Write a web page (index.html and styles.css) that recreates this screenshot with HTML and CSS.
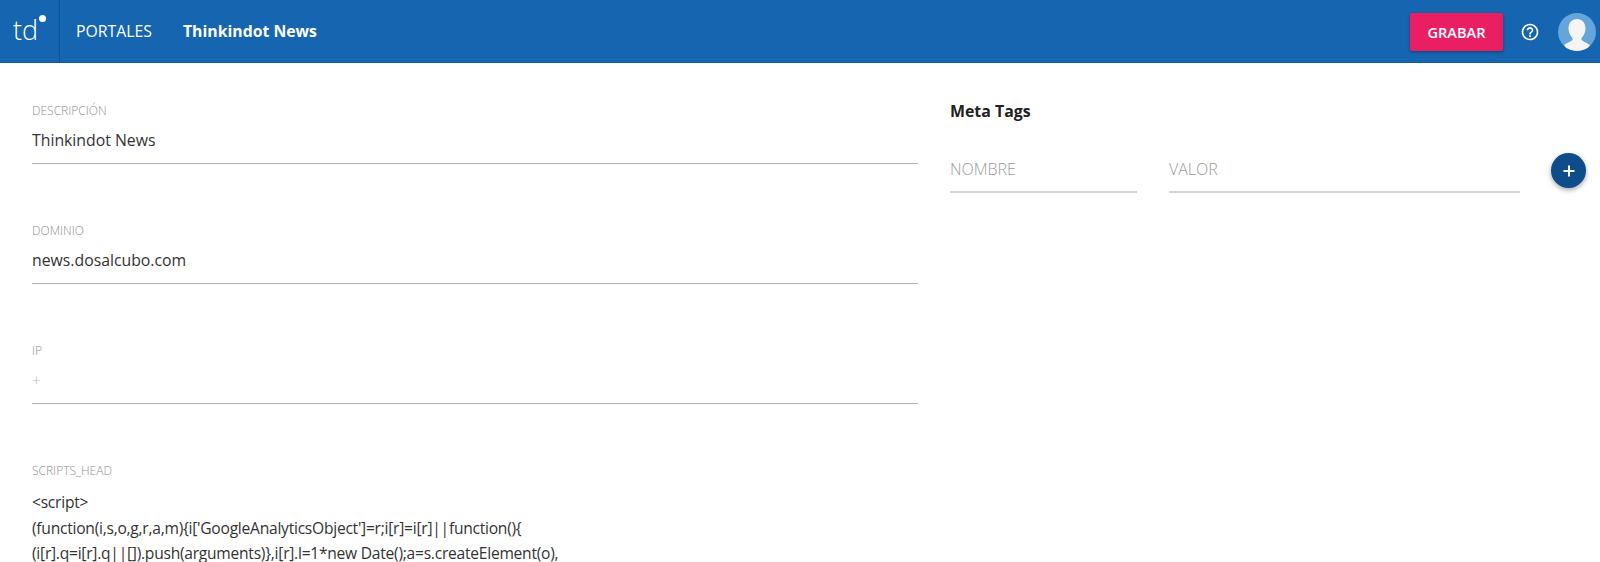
FILE: index.html
```html
<!DOCTYPE html>
<html lang="es">
<head>
<meta charset="utf-8">
<title>Thinkindot News</title>
<link rel="stylesheet" href="styles.css">
</head>
<body>
<header class="topbar">
  <div class="logo"><span class="logo-text">td</span><span class="logo-dot"></span></div>
  <nav class="crumbs">
    <a class="crumb">PORTALES</a>
    <a class="crumb crumb-current">Thinkindot News</a>
  </nav>
  <div class="actions">
    <button class="save">GRABAR</button>
    <svg class="help" viewBox="0 0 24 24" width="20" height="20" aria-hidden="true">
      <path fill="#fff" d="M11 18h2v-2h-2v2zm1-16C6.48 2 2 6.48 2 12s4.48 10 10 10 10-4.48 10-10S17.52 2 12 2zm0 18c-4.41 0-8-3.59-8-8s3.59-8 8-8 8 3.59 8 8-3.59 8-8 8zm0-14c-2.21 0-4 1.79-4 4h2c0-1.1.9-2 2-2s2 .9 2 2c0 2-3 1.75-3 5h2c0-2.25 3-2.5 3-5 0-2.21-1.79-4-4-4z"/>
    </svg>
    <svg class="avatar" viewBox="0 0 38 38" width="38" height="38" aria-hidden="true">
      <defs><clipPath id="round"><circle cx="19" cy="19" r="19"/></clipPath></defs>
      <g clip-path="url(#round)">
        <rect width="38" height="38" fill="#64a5dc"/>
        <path fill="#f5f5f5" d="M19 6c5 0 8.500 3.600 8.500 9.500 0 4-2 7.500-4 9.500v1.500c0 1.500 4 2.500 8 5v7h-25v-7c4-2.500 8-3.500 8-5V25c-2-2-4-5.500-4-9.500C10.500 9.600 14 6 19 6z"/>
      </g>
    </svg>
  </div>
</header>
<main class="page">
  <section class="form-col">
    <div class="field">
      <div class="label">DESCRIPCIÓN</div>
      <div class="value">Thinkindot News</div>
    </div>
    <div class="field">
      <div class="label">DOMINIO</div>
      <div class="value">news.dosalcubo.com</div>
    </div>
    <div class="field">
      <div class="label">IP</div>
      <div class="value value-empty">+</div>
    </div>
    <div class="field field-script">
      <div class="label">SCRIPTS_HEAD</div>
      <pre class="code">&lt;script&gt;
(function(i,s,o,g,r,a,m){i['GoogleAnalyticsObject']=r;i[r]=i[r]||function(){
(i[r].q=i[r].q||[]).push(arguments)},i[r].l=1*new Date();a=s.createElement(o),</pre>
    </div>
  </section>
  <section class="meta-col">
    <h2 class="meta-title">Meta Tags</h2>
    <div class="meta-row">
      <div class="meta-input meta-name">NOMBRE</div>
      <div class="meta-input meta-value">VALOR</div>
      <button class="fab" aria-label="Añadir">
        <svg viewBox="0 0 14 14" width="14" height="14" aria-hidden="true"><path d="M7 1.500v11M1.500 7h11" stroke="#fff" stroke-width="2" fill="none"/></svg>
      </button>
    </div>
  </section>
</main>
</body>
</html>
```
FILE: styles.css
```css
* { box-sizing: border-box; }
html, body { margin: 0; height: 562px; overflow: hidden; }
body { font-family: "Open Sans", sans-serif; background: #fff; color: #333; }

.topbar {
  display: flex;
  align-items: stretch;
  height: 63px;
  background: #1565b0;
  border-bottom: 1px solid #125a9f;
  color: #fff;
}
.logo {
  display: flex;
  width: 60px;
  padding: 12px 0 0 13px;
  border-right: 1px solid #115497;
}
.logo-text {
  font-size: 27px;
  font-weight: 300;
  line-height: 36px;
}
.logo-dot {
  width: 7px;
  height: 7px;
  margin: 3px 0 0 1px;
  border-radius: 50%;
  background: #fff;
}
.crumbs {
  display: flex;
  align-items: center;
  gap: 31px;
  padding-left: 16px;
  font-size: 15.8px;
}
.crumb-current { font-weight: 700; }
.actions {
  display: flex;
  align-items: center;
  margin-left: auto;
  padding: 2px 4px 0 0;
}
.save {
  width: 93px;
  height: 38px;
  margin-right: 17px;
  border: 0;
  border-radius: 2px;
  background: #e91e63;
  color: #fff;
  font: 600 14.6px "Open Sans", sans-serif;
  box-shadow: 0 1px 3px rgba(0,0,0,.35);
}
.help { margin-right: 18px; }
.avatar { display: block; }

.page {
  display: flex;
  gap: 32px;
  padding-left: 32px;
}
.form-col { flex: 0 0 886px; padding-top: 39px; }
.field { height: 120px; }
.label {
  font-size: 12px;
  font-weight: 300;
  line-height: 18px;
  color: #8f8f8f;
}
.value {
  height: 44px;
  padding-top: 7px;
  font-size: 15.8px;
  line-height: 26px;
  border-bottom: 1px solid #b0b0b0;
}
.value-empty { color: #bdbdbd; font-weight: 300; }
.code {
  margin: 10px 0 0;
  font: 15.6px/25.6px "Open Sans", sans-serif;
  letter-spacing: -0.25px;
}
.meta-col { flex: 0 0 618px; padding-top: 36px; }
.meta-title {
  margin: 0;
  font-size: 15.9px;
  font-weight: 700;
  line-height: 24px;
  color: #212121;
}
.meta-row {
  display: flex;
  align-items: flex-start;
  gap: 32px;
  margin-top: 22px;
}
.meta-input {
  height: 48px;
  padding-top: 12px;
  font-size: 16px;
  font-weight: 300;
  line-height: 24px;
  color: #9a9a9a;
  border-bottom: 2px solid #d4d4d4;
}
.meta-name { width: 187px; }
.meta-value { width: 351px; }
.fab {
  display: flex;
  align-items: center;
  justify-content: center;
  width: 35px;
  height: 35px;
  margin: 8px 0 0 -1px;
  padding: 0;
  border: 0;
  border-radius: 50%;
  background: #0f4c8a;
  box-shadow: 0 2px 5px rgba(0,0,0,.35);
}
```
